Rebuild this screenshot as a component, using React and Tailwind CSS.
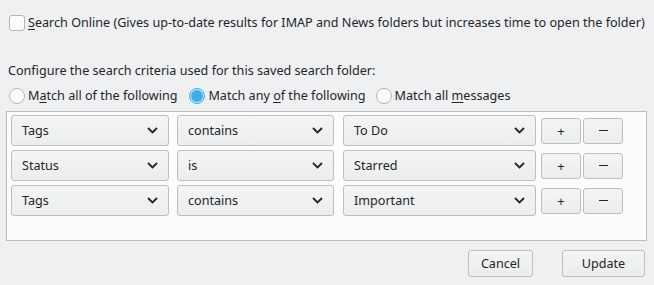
import React from "react";

const font = { fontFamily: '"Noto Sans", "DejaVu Sans", sans-serif' };

function Chevron() {
  return (
    <svg width="11" height="7" viewBox="0 0 11 7" className="shrink-0">
      <path d="M1 1 L5.5 5.5 L10 1" fill="none" stroke="#232627" strokeWidth="1.8" />
    </svg>
  );
}

function Combo({ label, w }) {
  return (
    <div
      className={`${w} h-[31px] shrink-0 flex items-center justify-between pl-[10px] pr-[10px] rounded-[3px] border border-[#bcbebf] bg-gradient-to-b from-[#f3f4f4] to-[#eceded]`}
    >
      <span className="pt-[1px]">{label}</span>
      <Chevron />
    </div>
  );
}

function SmallBtn({ children }) {
  return (
    <div className="w-[40px] h-[26px] shrink-0 flex items-center justify-center rounded-[3px] border border-[#bcbebf] bg-gradient-to-b from-[#f3f4f4] to-[#eceded]">
      {children}
    </div>
  );
}

function Row({ a, b, c }) {
  return (
    <div className="flex items-center h-[31px]">
      <Combo label={a} w="w-[158px]" />
      <div className="w-[8px]" />
      <Combo label={b} w="w-[157px]" />
      <div className="w-[9px]" />
      <Combo label={c} w="w-[193px]" />
      <div className="w-[5px]" />
      <SmallBtn>
        <span className="text-[13px]">+</span>
      </SmallBtn>
      <div className="w-[2px]" />
      <SmallBtn>
        <span className="block w-[9px] h-[1px] bg-[#232627]" />
      </SmallBtn>
    </div>
  );
}

function Radio({ checked }) {
  return checked ? (
    <div className="w-[16px] h-[16px] rounded-full border border-[#3daee9] bg-[#cfeaf8] flex items-center justify-center shrink-0">
      <div className="w-[12px] h-[12px] rounded-full bg-[#3daee9]" />
    </div>
  ) : (
    <div className="w-[16px] h-[16px] rounded-full border border-[#b4b6b8] bg-[#fcfcfc] shrink-0" />
  );
}

export default function App() {
  return (
    <div
      className="w-[654px] h-[285px] bg-[#eff0f1] text-[#232627] text-[12.6px] leading-[18px] flex flex-col overflow-hidden"
      style={font}
    >
      <div className="flex items-center pl-[9px] pt-[15px] h-[31px]">
        <div className="w-[16px] h-[16px] rounded-[3px] border border-[#b4b6b8] bg-[#fcfcfc] shrink-0" />
        <span className="ml-[3px] whitespace-nowrap">
          <span className="underline underline-offset-2">S</span>earch Online (Gives up-to-date results for IMAP and News folders but increases time to open the folder)
        </span>
      </div>
      <div className="pl-[8px] mt-[31px] whitespace-nowrap">
        Configure the search criteria used for this saved search folder:
      </div>
      <div className="flex items-center pl-[9px] mt-[8px] h-[16px] whitespace-nowrap">
        <Radio />
        <span className="ml-[3px]">
          M<span className="underline underline-offset-2">a</span>tch all of the following
        </span>
        <div className="w-[12px]" />
        <Radio checked />
        <span className="ml-[3px]">
          Match any <span className="underline underline-offset-2">o</span>f the following
        </span>
        <div className="w-[10px]" />
        <Radio />
        <span className="ml-[3px]">
          Match all <span className="underline underline-offset-2">m</span>essages
        </span>
      </div>
      <div className="ml-[6px] mt-[7px] w-[641px] h-[130px] border border-[#bcbebf] bg-[#fcfcfc] pl-[4px] pt-[3px] flex flex-col gap-[4px]">
        <Row a="Tags" b="contains" c="To Do" />
        <Row a="Status" b="is" c="Starred" />
        <Row a="Tags" b="contains" c="Important" />
      </div>
      <div className="flex justify-end mt-[9px] pr-[9px] gap-[29px]">
        <div className="w-[65px] h-[27px] flex items-center justify-center rounded-[3px] border border-[#bcbebf] bg-gradient-to-b from-[#f3f4f4] to-[#eceded]">
          Cancel
        </div>
        <div className="w-[83px] h-[27px] flex items-center justify-center rounded-[3px] border border-[#bcbebf] bg-gradient-to-b from-[#f3f4f4] to-[#eceded]">
          Update
        </div>
      </div>
    </div>
  );
}
